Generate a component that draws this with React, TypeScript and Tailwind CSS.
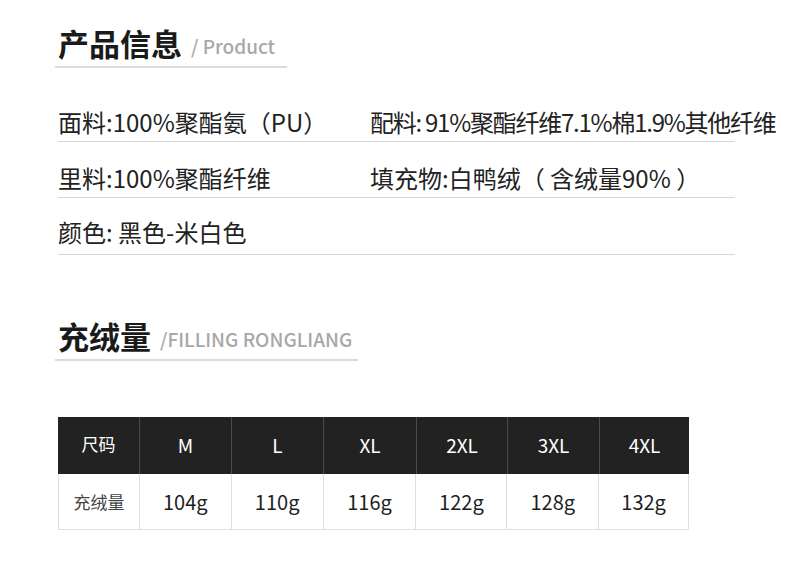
const sizes = ['M', 'L', 'XL', '2XL', '3XL', '4XL'];
const weights = ['104g', '110g', '116g', '122g', '128g', '132g'];
const colW = ['w-[92px]', 'w-[92px]', 'w-[93px]', 'w-[91px]', 'w-[92px]', 'w-[90px]'];

const font = "font-['Noto_Sans_CJK_SC','Noto_Sans',sans-serif]";

type HeadingProps = { cn: string; en: string; width: string };

const Heading = ({ cn, en, width }: HeadingProps) => (
  <div className={`ml-[55px] ${width} h-[68px] flex items-end pl-[3px] pb-[5px] border-b-2 border-[#dcdcdc]`}>
    <span className="text-[31px] leading-[36px] font-bold text-[#1a1a1a]">{cn}</span>
    <span className="ml-[9px] mb-[3px] text-[19px] leading-[24px] font-medium text-[#a8a8a8]">{en}</span>
  </div>
);

const Row = ({ left, right, tight }: { left: string; right?: string; tight?: boolean }) => (
  <div className="w-[677px] h-[56px] flex items-end pb-[5px] border-b border-[#d6d6d6] text-[24px] leading-[28px] text-[#222]">
    <div className="w-[312px] shrink-0 whitespace-nowrap">{left}</div>
    {right && (
      <div className={`whitespace-nowrap ${tight ? 'tracking-[-1.25px]' : ''}`}>{right}</div>
    )}
  </div>
);

export default function App() {
  return (
    <div className={`w-[790px] h-[579px] bg-white overflow-hidden ${font}`}>
      <Heading cn="产品信息" en="/ Product" width="w-[232px]" />

      <div className="ml-[58px] mt-[18px]">
        <Row left="面料:100%聚酯氨（PU）" right="配料: 91%聚酯纤维7.1%棉1.9%其他纤维" tight />
        <Row left="里料:100%聚酯纤维" right="填充物:白鸭绒（ 含绒量90% ）" />
        <div className="w-[677px] h-[57px] flex items-end pb-[8px] border-b border-[#d6d6d6] text-[24px] leading-[28px] text-[#222] whitespace-nowrap">
          颜色: 黑色-米白色
        </div>
      </div>

      <div className="mt-[38px]">
        <Heading cn="充绒量" en="/FILLING RONGLIANG" width="w-[303px]" />
      </div>

      <div className="ml-[58px] mt-[56px] w-[631px]">
        <div className="flex h-[57px] bg-[#222] text-white">
          <div className="w-[81px] flex items-center justify-center text-[17px] pb-[3px]">尺码</div>
          {sizes.map((s, i) => (
            <div
              key={s}
              className={`${colW[i]} flex items-center justify-center border-l border-[#4a4a4a] text-[19px]`}
            >
              {s}
            </div>
          ))}
        </div>
        <div className="flex h-[56px] border-b border-x border-[#dedede] text-[#1e1e1e]">
          <div className="w-[80px] flex items-center justify-center text-[17px] text-[#444]">充绒量</div>
          {weights.map((w, i) => (
            <div
              key={w}
              className={`${colW[i]} flex items-center justify-center border-l border-[#dedede] text-[20px]`}
            >
              {w}
            </div>
          ))}
        </div>
      </div>
    </div>
  );
}
